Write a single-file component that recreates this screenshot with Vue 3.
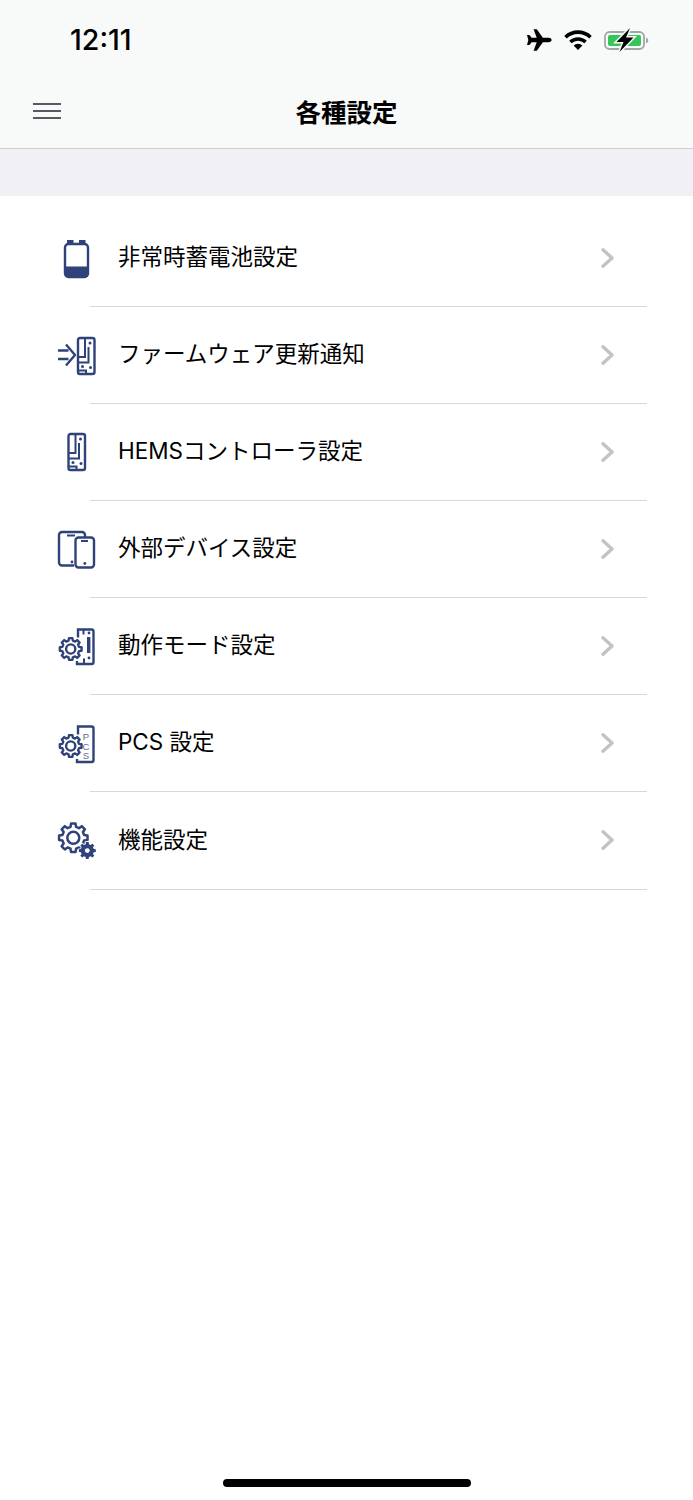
<script setup>
// builds a closed cog outline around (cx, cy)
function gearPath(cx, cy, outer, inner, teeth) {
  const step = (Math.PI * 2) / teeth
  const pts = []
  for (let i = 0; i < teeth; i++) {
    const a = i * step - Math.PI / 2
    const w = step * 0.2
    const w2 = step * 0.32
    pts.push([a - w2, inner], [a - w, outer], [a + w, outer], [a + w2, inner])
  }
  const d = pts.map(([a, r], i) => {
    const x = (cx + Math.cos(a) * r).toFixed(2)
    const y = (cy + Math.sin(a) * r).toFixed(2)
    return (i ? 'L' : 'M') + x + ' ' + y
  })
  return d.join(' ') + ' Z'
}

const mediumGear = gearPath(16.7, 25, 11, 8.6, 8)
const bigGear = gearPath(19.3, 19.8, 14.4, 11.2, 8)
const smallGear = gearPath(33.3, 32.6, 8.6, 6.6, 8)

// circuit lines shared by the controller drawings
const traces = 'M21.5 4V23H15M15 28.5H25V13M15 36.5H22.5V40'

const items = [
  { id: 1, icon: 'battery', label: '非常時蓄電池設定' },
  { id: 2, icon: 'update', label: 'ファームウェア更新通知' },
  { id: 3, icon: 'board', label: 'HEMSコントローラ設定' },
  { id: 4, icon: 'devices', label: '外部デバイス設定' },
  { id: 5, icon: 'mode', label: '動作モード設定' },
  { id: 6, icon: 'pcs', label: 'PCS 設定' },
  { id: 7, icon: 'gears', label: '機能設定' },
]
</script>

<template>
  <div class="screen">
    <header class="head">
      <div class="status">
        <span class="time">12:11</span>
        <div class="status-icons">
          <svg class="plane" width="26" height="22" viewBox="0 0 26 22">
            <path d="M25.6 11c0-1.300-1.400-2.200-3-2.200h-5.700L10.800.2H7.600l3.100 8.600H5.600L3.500 6H1l1.300 5L1 16h2.500l2.100-2.800h5.100l-3.100 8.600h3.200l6.100-8.600h5.700c1.600 0 3-.9 3-2.200z" fill="#000"/>
          </svg>
          <svg class="wifi" width="28" height="20" viewBox="0 0 28 20">
            <path d="M1.500 7.200a18 18 0 0 1 25 0" fill="none" stroke="#000" stroke-width="3.600"/>
            <path d="M6.400 12a11 11 0 0 1 15.200 0" fill="none" stroke="#000" stroke-width="3.600"/>
            <path d="M14 20l-4.400-4.500a6.300 6.300 0 0 1 8.800 0z" fill="#000"/>
          </svg>
          <svg class="battery" width="45" height="24" viewBox="0 0 45 24">
            <rect x="1" y="4" width="39" height="17" rx="4.500" fill="none" stroke="#a3a5a6" stroke-width="1.800"/>
            <rect x="4" y="7" width="33" height="11" rx="2" fill="#33c659"/>
            <path d="M42 9.500c1.400.5 2.200 1.600 2.200 3s-.8 2.500-2.200 3z" fill="#a3a5a6"/>
            <path d="M26 0L12.500 14h7L15.500 24l14-14.500h-7.500z" fill="#000" stroke="#f8f9f9" stroke-width="3" paint-order="stroke"/>
          </svg>
        </div>
      </div>
      <div class="nav">
        <div class="menu-btn"><span></span><span></span><span></span></div>
        <h1 class="title">各種設定</h1>
      </div>
    </header>

    <div class="band"></div>

    <ul class="list">
      <li v-for="item in items" :key="item.id" class="row">
        <svg class="icon" width="44" height="44" viewBox="0 0 44 44">
          <g v-if="item.icon === 'battery'">
            <path d="M14 8V5h4.500v3M26 8V5h4.500v3" fill="#2f4279" stroke="#2f4279" stroke-width="2"/>
            <rect x="11" y="8" width="23" height="33" rx="3.500" fill="none" stroke="#2f4279" stroke-width="2.400"/>
            <path d="M11 30.500h23v7.500a3.500 3.500 0 0 1-3.500 3.500h-16a3.500 3.500 0 0 1-3.500-3.500z" fill="#2f4279"/>
          </g>
          <g v-else-if="item.icon === 'update'" fill="none" stroke="#2f4279" stroke-width="2.400">
            <path d="M4 17.500h10.500M4 26h10.500M12 11.500l9 10.500-9 10.500" stroke-linejoin="round"/>
            <g transform="translate(9.500 1)">
              <rect x="14.500" y="4" width="16.500" height="36" rx="2"/>
              <path :d="traces" stroke-width="2"/>
              <circle cx="26.500" cy="9" r="1.500" fill="#2f4279" stroke="none"/>
              <circle cx="19" cy="32.500" r="1.500" fill="#2f4279" stroke="none"/>
              <circle cx="27" cy="33.500" r="1.500" fill="#2f4279" stroke="none"/>
            </g>
          </g>
          <g v-else-if="item.icon === 'board'" fill="none" stroke="#2f4279" stroke-width="2.400">
            <rect x="14.500" y="4" width="16.500" height="36" rx="2"/>
            <path :d="traces" stroke-width="2"/>
            <circle cx="26.500" cy="9" r="1.500" fill="#2f4279" stroke="none"/>
            <circle cx="19" cy="32.500" r="1.500" fill="#2f4279" stroke="none"/>
            <circle cx="27" cy="33.500" r="1.500" fill="#2f4279" stroke="none"/>
          </g>
          <g v-else-if="item.icon === 'devices'" fill="none" stroke="#2f4279" stroke-width="2.400">
            <path d="M20 38.500H8a3 3 0 0 1-3-3V8a3 3 0 0 1 3-3h20a3 3 0 0 1 3 3v2.500"/>
            <rect x="21.500" y="10.500" width="18.500" height="30" rx="3"/>
            <path d="M13 8.500h8M27 14h7" stroke-width="1.800"/>
            <circle cx="18" cy="35" r="1.400" fill="#2f4279" stroke="none"/>
            <circle cx="30.800" cy="36.500" r="1.400" fill="#2f4279" stroke="none"/>
          </g>
          <g v-else-if="item.icon === 'mode'" fill="none" stroke="#2f4279" stroke-width="2.400">
            <path d="M24 13.500V5.500h13.500a2 2 0 0 1 2 2V38a2 2 0 0 1-2 2H23v-3"/>
            <path d="M29.500 5.500v5M30 34.500v5" stroke-width="2"/>
            <rect x="33" y="13" width="3.400" height="16" fill="#2f4279" stroke="none"/>
            <circle cx="35" cy="9" r="1.400" fill="#2f4279" stroke="none"/>
            <circle cx="35" cy="34" r="1.400" fill="#2f4279" stroke="none"/>
            <path :d="mediumGear" fill="#fff" stroke-linejoin="round"/>
            <circle cx="16.700" cy="25" r="4.600"/>
          </g>
          <g v-else-if="item.icon === 'pcs'" fill="none" stroke="#2f4279" stroke-width="2.400">
            <path d="M24 13.500V5.500h13.500a2 2 0 0 1 2 2V39a2 2 0 0 1-2 2H23v-3"/>
            <path :d="mediumGear" fill="#fff" stroke-linejoin="round"/>
            <circle cx="16.700" cy="25" r="4.600"/>
            <text x="32" y="19" class="pcs-text">P</text>
            <text x="32" y="29" class="pcs-text">C</text>
            <text x="32" y="38" class="pcs-text">S</text>
          </g>
          <g v-else fill="none" stroke="#2f4279" stroke-width="2.500">
            <path :d="bigGear" stroke-linejoin="round"/>
            <circle cx="19.300" cy="19.800" r="6"/>
            <path :d="smallGear" fill="#2f4279" stroke="#fff" stroke-width="1.500" stroke-linejoin="round" paint-order="stroke"/>
            <circle cx="33.300" cy="32.600" r="2.400" fill="#fff" stroke="none"/>
          </g>
        </svg>
        <span class="label">{{ item.label }}</span>
        <svg class="chevron" width="14" height="20" viewBox="0 0 14 20">
          <path d="M2 1.800L11 10l-9 8.200" fill="none" stroke="#c2c3c6" stroke-width="3.400" stroke-linecap="round" stroke-linejoin="round"/>
        </svg>
      </li>
    </ul>

    <div class="home-bar"></div>
  </div>
</template>

<style>
html, body { margin: 0; background: #fff; }
</style>

<style scoped>
.screen {
  position: relative;
  width: 693px;
  height: 1500px;
  overflow: hidden;
  background: #fff;
  color: #000;
  font-family: "Noto Sans CJK JP", "Noto Sans", sans-serif;
}
.head {
  height: 148px;
  background: #f8f9f9;
  border-bottom: 1px solid #cfcfd2;
}
.status {
  display: flex;
  justify-content: space-between;
  align-items: center;
  height: 79px;
  padding: 0 44px 0 70px;
}
.time {
  font-family: Inter, Roboto, sans-serif;
  font-size: 28.500px;
  font-weight: 500;
}
.status-icons {
  display: flex;
  align-items: center;
  gap: 12px;
}
.nav {
  display: flex;
  align-items: center;
  justify-content: center;
  position: relative;
  height: 63px;
}
.menu-btn {
  position: absolute;
  left: 33px;
  top: 24px;
  display: flex;
  flex-direction: column;
  gap: 5px;
  width: 28px;
}
.menu-btn span {
  display: block;
  height: 2px;
  background: #555a64;
}
.title {
  margin: 0;
  font-size: 25.500px;
  font-weight: 700;
  line-height: 1;
}
.band {
  height: 47px;
  background: #f0f0f5;
}
.list {
  list-style: none;
  margin: 0;
  padding: 14px 0 0;
}
.row {
  position: relative;
  display: flex;
  align-items: center;
  height: 97px;
  box-sizing: border-box;
  padding: 0 78px 2px 54px;
}
.row:last-child {
  height: 98px;
}
.row::after {
  content: "";
  position: absolute;
  left: 90px;
  right: 46px;
  bottom: 0;
  height: 1px;
  background: #d8d8da;
}
.icon {
  flex: none;
}
.label {
  flex: 1;
  margin-left: 20px;
  font-family: Inter, "Noto Sans CJK JP", sans-serif;
  font-size: 22.500px;
  line-height: 1;
}
.chevron {
  flex: none;
}
.pcs-text {
  font-family: "Liberation Sans", sans-serif;
  font-size: 9.500px;
  fill: #5d6b92;
  stroke: none;
  text-anchor: middle;
}
.home-bar {
  position: absolute;
  left: 223px;
  bottom: 13px;
  width: 248px;
  height: 8px;
  border-radius: 4px;
  background: #000;
}
</style>
